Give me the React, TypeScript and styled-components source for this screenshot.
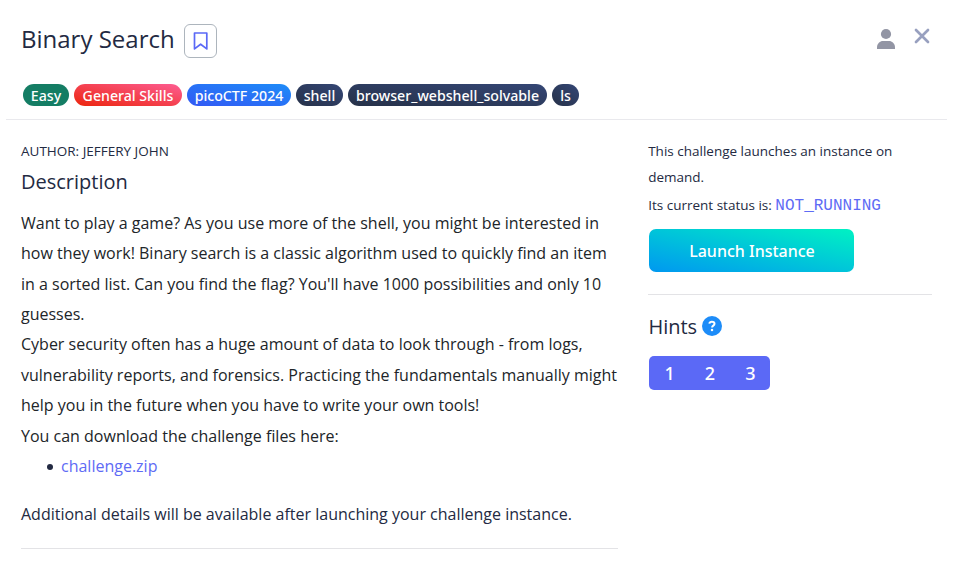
import React from "react";
import styled, { createGlobalStyle } from "styled-components";

const GlobalStyle = createGlobalStyle`
  * { box-sizing: border-box; }
  body {
    margin: 0;
    background: #fff;
    color: #232a42;
    font-family: "Open Sans", sans-serif;
    font-size: 16px;
  }
`;

const Modal = styled.main`
  width: 941px;
  margin-left: 6px;
  height: 580px;
  overflow: hidden;
`;

const Header = styled.header`
  height: 120px;
  padding: 24px 17px 0 15px;
  border-bottom: 1px solid #e9e9ed;
`;

const TitleRow = styled.div`
  display: flex;
  align-items: flex-start;
`;

const Title = styled.h1`
  margin: 0;
  font-size: 24px;
  font-weight: 400;
  line-height: 30px;
  white-space: nowrap;
  width: 163px;
`;

const BookmarkButton = styled.button`
  display: flex;
  align-items: center;
  justify-content: center;
  width: 33px;
  height: 34px;
  padding: 0;
  border: 1px solid #adb5bd;
  border-radius: 6px;
  background: #fff;
`;

const HeaderActions = styled.div`
  display: flex;
  align-items: flex-start;
  gap: 19px;
  margin-left: auto;
  padding-top: 4px;
  svg { display: block; }
`;

const Tags = styled.div`
  display: flex;
  gap: 5px;
  margin: 26px 0 0 2px;
`;

const Tag = styled.span<{ $fill: string; $width: number }>`
  width: ${(p) => p.$width}px;
  height: 22px;
  border-radius: 11px;
  background: ${(p) => p.$fill};
  color: #fff;
  font-family: "Noto Sans", sans-serif;
  font-size: 14.17px;
  font-weight: 500;
  line-height: 23px;
  text-align: center;
  white-space: nowrap;
`;

const Columns = styled.div`
  display: grid;
  grid-template-columns: 597px 284px;
  column-gap: 30px;
  padding: 17px 15px 0;
`;

const Column = styled.section`
  min-width: 0;
`;

const Author = styled.p`
  margin: 0;
  font-size: 13.5px;
  line-height: 28px;
`;

const Heading = styled.h2`
  display: flex;
  align-items: center;
  gap: 5px;
  margin: 0;
  font-size: 20px;
  font-weight: 400;
  line-height: 26px;
`;

const DescriptionHeading = styled(Heading)`
  margin-top: 4px;
`;

const Body = styled.div`
  margin-top: 12.8px;
  color: #212529;
  line-height: 30.4px;
  white-space: nowrap;
`;

const Files = styled.ul`
  margin: 0;
  padding-left: 26px;
  color: #232a42;
  list-style: none;
`;

const FileItem = styled.li`
  display: flex;
  align-items: center;
  gap: 8px;
  &::before {
    content: "";
    width: 6px;
    height: 6px;
    margin-top: 2px;
    border-radius: 50%;
    background: #232a42;
  }
`;

const FileLink = styled.a`
  color: #5e6bf5;
`;

const Note = styled.p`
  margin: 17.2px 0 0;
  line-height: 30.4px;
  white-space: nowrap;
`;

const Rule = styled.div<{ $top: number }>`
  height: 1px;
  margin-top: ${(p) => p.$top}px;
  background: #e3e3e6;
`;

const Status = styled.p`
  margin: 1px 0 0;
  padding-left: 0.2px;
  font-size: 13.5px;
  line-height: 26px;
  white-space: nowrap;
`;

const StatusLine = styled(Status)`
  margin-top: 2px;
`;

const Code = styled.code`
  color: #5e6bf5;
  font-family: "Liberation Mono", monospace;
  font-size: 16px;
  line-height: 1;
`;

const LaunchButton = styled.button`
  display: block;
  width: 205px;
  height: 43px;
  margin: 11px 0 0 1px;
  padding: 1px 0 0 1px;
  border: 0;
  border-radius: 7px;
  background: linear-gradient(to top right, #0098f0, #00f2c3);
  color: #fff;
  font: 500 16px/42px "Noto Sans", sans-serif;
`;

const HintsHeading = styled(Heading)`
  margin-top: 18px;
`;

const HintsLabel = styled.span`
  padding-top: 1px;
  padding-left: 0.4px;
  line-height: 25px;
`;

const HintGroup = styled.div`
  display: flex;
  width: 121px;
  height: 34px;
  margin: 17px 0 0 1px;
  border-radius: 5px;
  background: #5b69f6;
  overflow: hidden;
`;

const HintButton = styled.button`
  flex: 1;
  padding: 0 0 0 1px;
  border: 0;
  background: transparent;
  color: #fff;
  font: 500 18px/34px "Noto Sans", sans-serif;
`;

const TAGS = [
  { label: "Easy", fill: "#147d64", width: 46 },
  { label: "General Skills", fill: "linear-gradient(to top right, #ec250d, #fd5d93)", width: 108 },
  { label: "picoCTF 2024", fill: "linear-gradient(to top right, #3358f4, #1d8cf8)", width: 104 },
  { label: "shell", fill: "linear-gradient(to top right, #263148, #344675)", width: 47 },
  { label: "browser_webshell_solvable", fill: "linear-gradient(to top right, #263148, #344675)", width: 199 },
  { label: "ls", fill: "linear-gradient(to top right, #263148, #344675)", width: 27 },
];

export default function App() {
  return (
    <>
      <GlobalStyle />
      <Modal>
        <Header>
          <TitleRow>
            <Title>Binary Search</Title>
            <BookmarkButton aria-label="Bookmark">
              <svg width="15" height="18" viewBox="0 0 15 18" fill="none" stroke="#5b69f6" strokeWidth="1.7" strokeLinejoin="round">
                <path d="M1.5 1h12.3v15.9l-6.15-4.7-6.15 4.7z" />
              </svg>
            </BookmarkButton>
            <HeaderActions>
              <svg width="18" height="21" viewBox="0 0 18 21" fill="#9295a4">
                <circle cx="9" cy="6" r="5.1" />
                <path d="M0 21v-1.5C0 15.500 3 13 6 13h6c3 0 6 2.500 6 6.500V21z" />
              </svg>
              <svg width="16" height="16" viewBox="0 0 16 16" fill="none" stroke="#98a0bf" strokeWidth="2.7" strokeLinecap="round">
                <path d="M2 2l12 12M14 2L2 14" />
              </svg>
            </HeaderActions>
          </TitleRow>
          <Tags>
            {TAGS.map((t) => (
              <Tag key={t.label} $fill={t.fill} $width={t.width}>{t.label}</Tag>
            ))}
          </Tags>
        </Header>
        <Columns>
          <Column>
            <Author>AUTHOR: JEFFERY JOHN</Author>
            <DescriptionHeading>Description</DescriptionHeading>
            <Body>
              Want to play a game? As you use more of the shell, you might be interested in<br />
              how they work! Binary search is a classic algorithm used to quickly find an item<br />
              in a sorted list. Can you find the flag? You'll have 1000 possibilities and only 10<br />
              guesses.<br />
              Cyber security often has a huge amount of data to look through - from logs,<br />
              vulnerability reports, and forensics. Practicing the fundamentals manually might<br />
              help you in the future when you have to write your own tools!<br />
              You can download the challenge files here:
              <Files>
                <FileItem><FileLink>challenge.zip</FileLink></FileItem>
              </Files>
            </Body>
            <Note>Additional details will be available after launching your challenge instance.</Note>
            <Rule $top={19} />
          </Column>
          <Column>
            <Status>This challenge launches an instance on<br />demand.</Status>
            <StatusLine>Its current status is: <Code>NOT_RUNNING</Code></StatusLine>
            <LaunchButton>Launch Instance</LaunchButton>
            <Rule $top={22} />
            <HintsHeading>
              <HintsLabel>Hints</HintsLabel>
              <svg width="20" height="20" viewBox="0 0 20 20">
                <circle cx="10" cy="10" r="10" fill="#1d8cf8" />
                <path d="M7.300 7.600C7.600 6.300 8.500 5.700 9.900 5.700c1.500 0 2.600.8 2.600 2.100 0 1.900-2.400 1.800-2.400 3.600" fill="none" stroke="#fff" strokeWidth="2" />
                <circle cx="10" cy="13.900" r="1.250" fill="#fff" />
              </svg>
            </HintsHeading>
            <HintGroup>
              <HintButton>1</HintButton>
              <HintButton>2</HintButton>
              <HintButton>3</HintButton>
            </HintGroup>
          </Column>
        </Columns>
      </Modal>
    </>
  );
}
